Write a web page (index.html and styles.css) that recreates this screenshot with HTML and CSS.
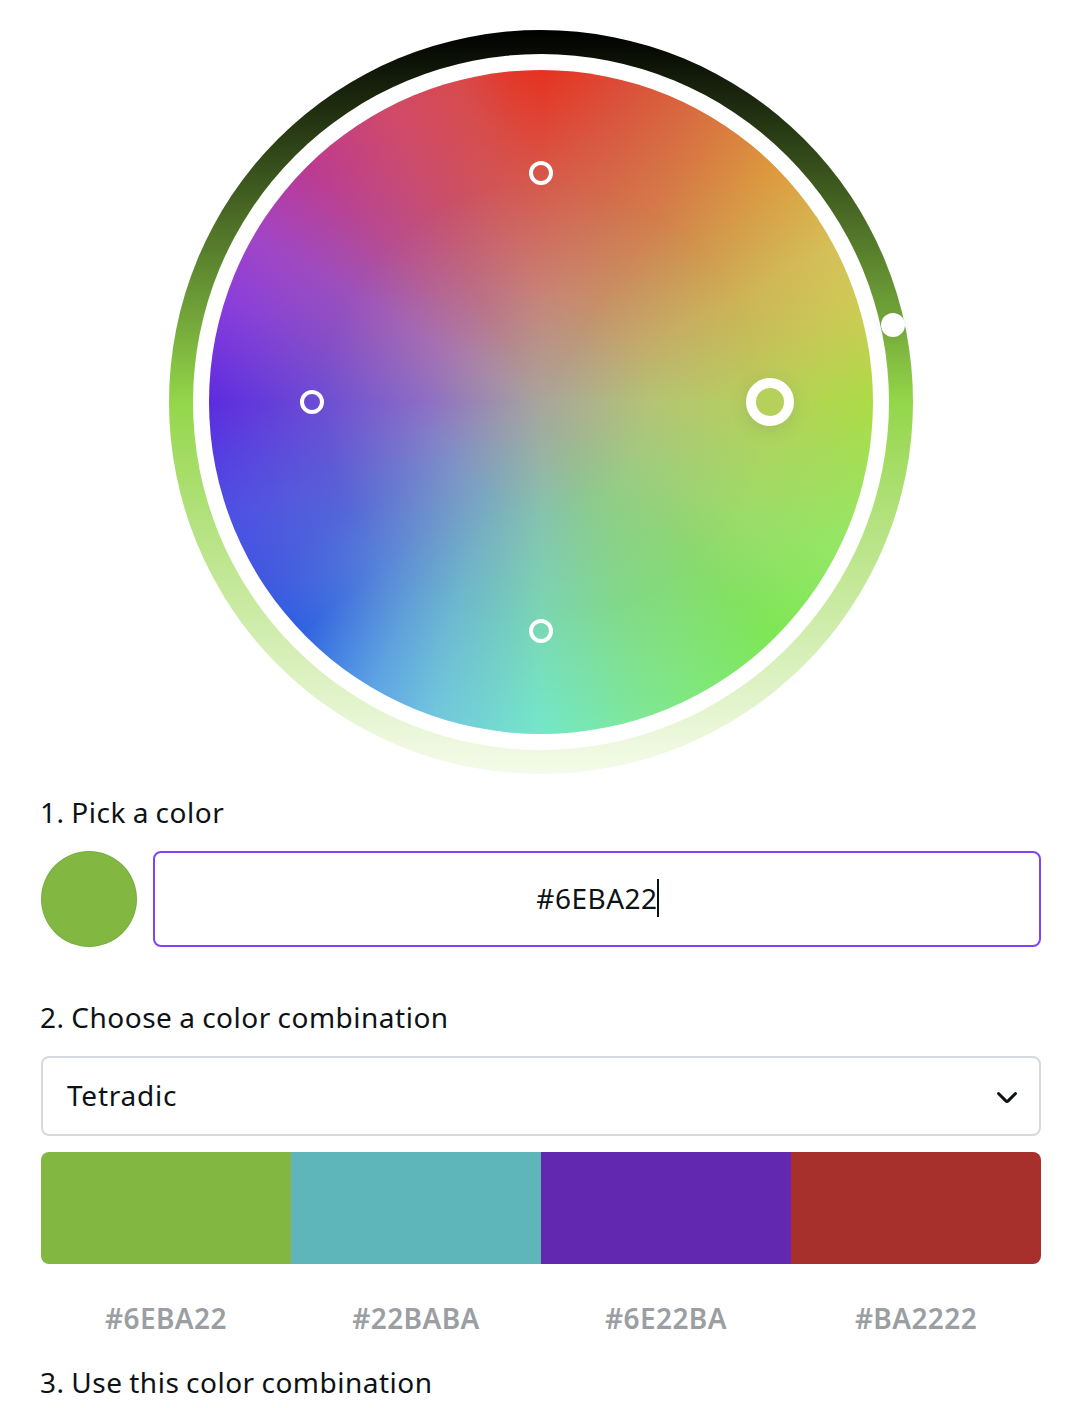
FILE: index.html
```html
<!DOCTYPE html>
<html lang="en">
<head>
<meta charset="utf-8">
<title>Color wheel</title>
<link rel="stylesheet" href="styles.css">
</head>
<body>
<main class="picker">
  <div class="ring">
    <div class="gap">
      <div class="wheel">
        <div class="hue hue-mid"></div>
        <div class="hue hue-inner"></div>
        <div class="hue hue-core"></div>
      </div>
    </div>
    <span class="pin pin-top"></span>
    <span class="pin pin-left"></span>
    <span class="pin pin-bottom"></span>
    <span class="pin pin-main"></span>
    <span class="shade-thumb"></span>
  </div>

  <h2 class="label label-pick"><span>1. Pick a color</span></h2>
  <div class="pick-row">
    <span class="current"></span>
    <div class="hex-input"><span class="hex-value">#6EBA22</span><span class="caret"></span></div>
  </div>

  <h2 class="label label-choose"><span>2. Choose a color combination</span></h2>
  <div class="select">
    <span class="select-value">Tetradic</span>
    <svg class="chevron" width="24" height="16" viewBox="0 0 24 16" fill="none" stroke="#0d1216" stroke-width="3" stroke-linecap="round" stroke-linejoin="round"><path d="M3.5 3.5 10.6 10.6Q12 12 13.4 10.6L20.5 3.5"/></svg>
  </div>
  <div class="swatches">
    <span class="green"></span><span class="teal"></span><span class="purple"></span><span class="red"></span>
  </div>
  <div class="codes">
    <span>#6EBA22</span><span>#22BABA</span><span>#6E22BA</span><span>#BA2222</span>
  </div>

  <h2 class="label label-use"><span>3. Use this color combination</span></h2>
</main>
</body>
</html>
```
FILE: styles.css
```css
* { box-sizing: border-box; }

body {
  margin: 0;
  background: #fff;
  color: #0d1216;
  font: 400 28px/38px "Noto Sans", sans-serif;
}

.picker {
  display: flex;
  flex-direction: column;
  width: 1074px;
  height: 1408px;
  padding: 30px 33px 0 41px;
  overflow: hidden;
}

.ring {
  position: relative;
  flex: none;
  align-self: center;
  width: 744px;
  height: 744px;
  padding: 24px;
  border-radius: 50%;
  background: linear-gradient(#000, #94d64a 50%, #f5fbeb);
}

.gap {
  height: 100%;
  padding: 16px;
  border-radius: 50%;
  background: #fff;
}

/* The wheel blends four rings of hues, from the saturated rim to the grey core. */
.wheel {
  display: grid;
  height: 100%;
  border-radius: 50%;
  background:
    conic-gradient(#e63222 0deg, #e43a28 5deg, #dc4c38 14deg, #d8683f 26deg, #de9a3e 45deg,
      #d6c058 62deg, #cfcb56 73deg, #acdc46 90deg, #9fe25e 106deg,
      #94e866 117deg, #7ee854 135deg, #80e890 160deg, #74e8ca 180deg,
      #72c6de 199deg, #5ca2e6 211deg, #3062e2 226deg, #4258e0 238deg,
      #4e52e4 250deg, #5c2ce0 270deg, #8c3edc 288deg, #a244c8 300deg,
      #bc3a92 315deg, #d24a68 333deg, #d84a4c 346deg, #e43828 355deg, #e63222 360deg);
}

/* isolation keeps the grey core painted above the masked rings */
.hue {
  grid-area: 1 / 1;
  border-radius: 50%;
  isolation: isolate;
}

.hue-mid {
  background: conic-gradient(#d6594a 0deg, #d4684a 16deg, #d47c4a 32deg, #d0984e 47deg,
    #ceb256 62deg, #b8d05c 90deg, #9cda6a 120deg, #88da70 137deg,
    #82da88 158deg, #7ad8b4 180deg, #6cb8d0 203deg, #5a86d8 224deg,
    #5468d8 240deg, #5e58d6 254deg, #6c4cd4 270deg, #9c50bc 300deg, #b84c8e 317deg,
    #c84e6c 333deg, #d25456 347deg, #d6594a 360deg);
  mask-image: radial-gradient(closest-side, #000 67%, transparent);
}

.hue-inner {
  background: conic-gradient(#c88276 0deg, #c69068 30deg, #c2aa6c 60deg,
    #b4c474 90deg, #a2ca80 120deg, #8ecb8c 150deg, #86c2ae 180deg,
    #7aa8c0 210deg, #7e8cc8 240deg, #8e70c4 270deg, #a874ae 300deg,
    #ba7488 330deg, #c88276 360deg);
  mask-image: radial-gradient(closest-side, #000 33%, transparent 67%);
}

.hue-core {
  background: radial-gradient(closest-side, #a9a59c, rgba(169, 165, 156, 0) 33%);
}

.pin {
  position: absolute;
  width: 24px;
  height: 24px;
  border: 4px solid #fff;
  border-radius: 50%;
}

.pin-top { left: 360px; top: 131px; }
.pin-left { left: 131px; top: 360px; }
.pin-bottom { left: 360px; top: 589px; }

.pin-main {
  left: 577px;
  top: 348px;
  width: 48px;
  height: 48px;
  border-width: 10px;
  background: #b6d05c;
  box-shadow: 0 4px 18px rgba(64, 87, 109, 0.16);
}

.shade-thumb {
  position: absolute;
  left: 712px;
  top: 283px;
  width: 24px;
  height: 24px;
  border-radius: 50%;
  background: #fff;
  box-shadow: 0 0 8px rgba(64, 87, 109, 0.12);
}

.label {
  flex: none;
  height: 38px;
  margin: 0 0 0 -1px;
  font-size: 28px;
  font-weight: 400;
  letter-spacing: 0.5px;
  word-spacing: -1px;
  white-space: nowrap;
}

.label-pick { margin-top: 19px; }
.label-choose { margin-top: 51px; }
.label-use { margin-top: 26px; }

.pick-row {
  display: flex;
  flex: none;
  gap: 16px;
  height: 96px;
  margin-top: 20px;
}

.current {
  width: 96px;
  border-radius: 50%;
  background: #82b742;
  box-shadow: inset 0 0 0 1px rgba(57, 76, 96, 0.1);
}

.hex-input {
  display: flex;
  flex: 1;
  align-items: center;
  justify-content: center;
  padding-bottom: 2px;
  border: 2px solid #8044f8;
  border-radius: 8px;
}

.hex-value { letter-spacing: 0.5px; }

.caret {
  width: 2px;
  height: 38px;
  margin: 0 -1px 0 -1px;
  background: #0d1216;
}

.select {
  display: flex;
  flex: none;
  align-items: center;
  justify-content: space-between;
  height: 80px;
  margin-top: 20px;
  padding: 0 20px 2px 24px;
  border: 2px solid #d6dadf;
  border-radius: 8px;
}

.select-value { letter-spacing: 0.75px; }

.chevron { margin-top: 5px; }

.swatches,
.codes {
  display: grid;
  flex: none;
  grid-template-columns: repeat(4, 1fr);
}

.swatches {
  height: 112px;
  margin-top: 16px;
  border-radius: 8px;
  overflow: hidden;
}

.green { background: #82b742; }
.teal { background: #5fb6ba; }
.purple { background: #6228b0; }
.red { background: #a7302c; }

.codes {
  height: 38px;
  margin-top: 35px;
  color: #9b9ea3;
  font-weight: 600;
  letter-spacing: 0.4px;
  text-align: center;
}
```
